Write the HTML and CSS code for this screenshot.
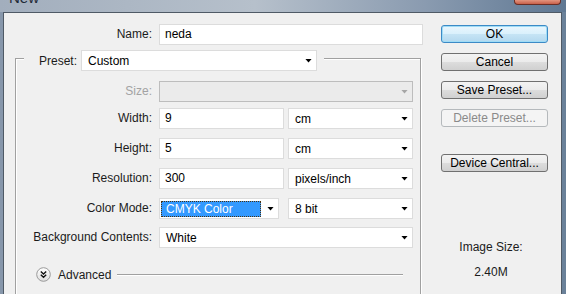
FILE: index.html
```html
<!DOCTYPE html>
<html lang="en">
<head>
    <meta charset="UTF-8">
    <title>New</title>
    <link rel="stylesheet" href="styles.css">
</head>
<body>
    <div class="window">
        <div class="titlebar">
            <span class="title">New</span>
            <span class="close-btn"></span>
        </div>
        <div class="dialog">
            <div class="main">
                <div class="name-row">
                    <span class="label">Name:</span>
                    <div class="field w-name">neda</div>
                </div>

                <fieldset class="group">
                    <legend class="group-head">
                        <span class="legend-label">Preset:</span>
                        <div class="select w-preset">Custom<span class="arrow"></span></div>
                    </legend>

                    <div class="row row-size">
                        <span class="label dim">Size:</span>
                        <div class="select disabled w-full"><span class="arrow"></span></div>
                    </div>
                    <div class="row">
                        <span class="label">Width:</span>
                        <div class="field w-num">9</div>
                        <div class="select w-unit">cm<span class="arrow"></span></div>
                    </div>
                    <div class="row">
                        <span class="label">Height:</span>
                        <div class="field w-num">5</div>
                        <div class="select w-unit">cm<span class="arrow"></span></div>
                    </div>
                    <div class="row">
                        <span class="label">Resolution:</span>
                        <div class="field w-num">300</div>
                        <div class="select w-unit">pixels/inch<span class="arrow"></span></div>
                    </div>
                    <div class="row row-color">
                        <span class="label">Color Mode:</span>
                        <div class="select focused w-mode"><span class="highlight">CMYK Color</span><span class="arrow"></span></div>
                        <div class="select w-unit w-bits">8 bit<span class="arrow"></span></div>
                    </div>
                    <div class="row row-last">
                        <span class="label">Background Contents:</span>
                        <div class="select w-full">White<span class="arrow"></span></div>
                    </div>

                    <div class="advanced">
                        <svg class="adv-icon" width="15" height="15" viewBox="0 0 15 15">
                            <defs>
                                <linearGradient id="advFill" x1="0" y1="0" x2="0" y2="1">
                                    <stop offset="0" stop-color="#ffffff"/>
                                    <stop offset="1" stop-color="#dedede"/>
                                </linearGradient>
                            </defs>
                            <circle cx="7.5" cy="7.5" r="6.8" fill="url(#advFill)" stroke="#9a9a9a" stroke-width="1"/>
                            <path d="M4.8 4.6 L7.5 7 L10.2 4.6 M4.8 7.8 L7.5 10.2 L10.2 7.8" fill="none" stroke="#111" stroke-width="1.4"/>
                        </svg>
                        <span class="adv-text">Advanced</span>
                        <span class="adv-line"></span>
                    </div>
                </fieldset>
            </div>

            <div class="side">
                <div class="btn primary">OK</div>
                <div class="btn">Cancel</div>
                <div class="btn">Save Preset...</div>
                <div class="btn disabled">Delete Preset...</div>
                <div class="btn spaced">Device Central...</div>
                <div class="info">
                    <div>Image Size:</div>
                    <div class="info-value">2.40M</div>
                </div>
            </div>
        </div>
    </div>
</body>
</html>
```

FILE: styles.css
```css
* {
    box-sizing: border-box;
}

html, body {
    margin: 0;
    padding: 0;
    height: 100%;
}

body {
    overflow: hidden;
    background: linear-gradient(to right, #8797ab, #6a8199);
    font-family: "Liberation Sans", Arial, sans-serif;
    font-size: 12px;
    color: #1b1b1b;
}

.window {
    height: 294px;
    display: flex;
    flex-direction: column;
    overflow: hidden;
}

/* window chrome */
.titlebar {
    flex: none;
    height: 12px;
    display: flex;
    align-items: flex-start;
    overflow: hidden;
    background: linear-gradient(to right, #a2aebd 0%, #b6c0cb 45%, #8a9bb0 75%, #5f7893 100%);
}

.title {
    margin: -10px 0 0 9px;
    font-size: 15px;
    line-height: 15px;
    color: #1f2a36;
}

.close-btn {
    margin-left: auto;
    margin-right: 5px;
    width: 47px;
    height: 5px;
    background: linear-gradient(#e3957f, #c8604a);
    border: 1px solid #6b2e25;
    border-top: none;
    border-radius: 0 0 4px 4px;
}

.dialog {
    flex: 1;
    min-height: 0;
    display: flex;
    overflow: hidden;
    margin: 0 4px 0 3px;
    background-color: #f0f0f0;
    border: 1px solid #4f5a66;
    border-bottom: none;
}

/* left column */
.main {
    width: 420px;
    padding-top: 11px;
}

.name-row {
    display: flex;
}

.label {
    width: 148px;
    margin-right: 7px;
    text-align: right;
    line-height: 21px;
    white-space: nowrap;
}

.label.dim {
    color: #a3a3a3;
}

.field {
    height: 21px;
    padding: 0 5px;
    line-height: 19px;
    color: #000;
    background-color: #fff;
    border: 1px solid #dcdcdc;
}

.select {
    height: 21px;
    display: flex;
    align-items: center;
    justify-content: space-between;
    padding: 0 4px 0 6px;
    color: #000;
    background-color: #fff;
    border: 1px solid #dcdcdc;
    white-space: nowrap;
}

.arrow {
    width: 7px;
    height: 4px;
    background-color: #000;
    clip-path: polygon(0 0, 100% 0, 50% 100%);
}

.select.disabled {
    background-color: #ebebeb;
    border-color: #bdbdbd;
}

.select.disabled .arrow {
    margin-left: auto;
    background-color: #a6a6a6;
}

.w-name { width: 264px; }
.w-preset { width: 236px; }
.w-full { width: 254px; }
.w-num { width: 125px; }
.w-unit { width: 125px; margin-left: 4px; }
.w-mode { width: 120px; }
.w-bits { margin-left: 9px; }

.select.focused {
    padding-left: 1px;
}

.highlight {
    width: 100px;
    height: 16px;
    padding-left: 4px;
    line-height: 14px;
    color: #fff;
    background-color: #3399ff;
    border: 1px dotted #4a3210;
}

/* Preset group box, runs on past the bottom of the dialog */
.group {
    margin: 1px 3px 0 11px;
    padding: 10px 0 40px 8px;
    min-width: 0;
    border: 1px solid #a0a0a0;
    box-shadow: inset 1px 1px 0 #fff, 1px 1px 0 #fff;
}

.group-head {
    display: flex;
    align-items: center;
    margin: 0;
    padding: 4px 7px 0 0;
    background-color: #f0f0f0;
}

.legend-label {
    width: 53px;
    margin-right: 4px;
    text-align: right;
}

.row {
    display: flex;
    margin-bottom: 9px;
}

.row .label {
    width: 128px;
}

.row-size { margin-bottom: 6px; }
.row-color { margin-bottom: 8px; }
.row-last { margin-bottom: 0; }

.advanced {
    display: flex;
    align-items: center;
    height: 15px;
    margin: 19px 17px 0 12px;
}

.adv-icon {
    flex: none;
}

.adv-text {
    margin-left: 7px;
    color: #1b1b1b;
}

.adv-line {
    flex: 1;
    height: 1px;
    margin-left: 6px;
    background-color: #a0a0a0;
    box-shadow: 0 1px 0 #fff;
}

/* right column */
.side {
    width: 137px;
    padding: 12px 0 0 17px;
    display: flex;
    flex-direction: column;
}

.btn {
    width: 107px;
    height: 18px;
    line-height: 16px;
    text-align: center;
    color: #000;
    border: 1px solid #707070;
    border-radius: 3px;
    background: linear-gradient(#f3f3f3, #ebebeb 50%, #dddddd 50%, #d0d0d0);
}

.btn + .btn {
    margin-top: 10px;
}

.btn.primary {
    border-color: #3c8ac6;
    background: linear-gradient(#eaf6fd, #d9f0fc 50%, #c6e4f5 50%, #b3d8ef);
    box-shadow: inset 0 0 0 1px #9fdcf6;
}

.btn.disabled {
    color: #8a8a8a;
    border-color: #b5b9bc;
    background: #f4f4f4;
}

.btn.spaced {
    margin-top: 27px;
}

.info {
    width: 100px;
    margin-top: 68px;
    text-align: center;
    line-height: 14px;
}

.info-value {
    margin-top: 11px;
}
```
